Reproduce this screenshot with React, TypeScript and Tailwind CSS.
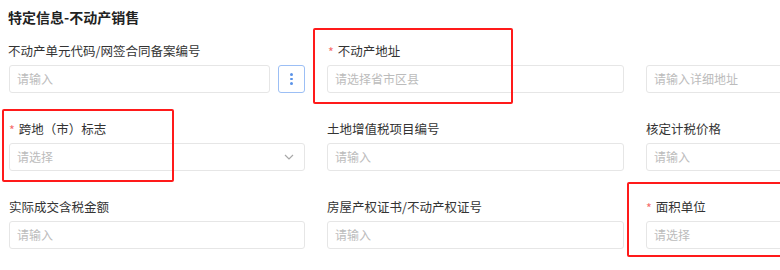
import React from 'react';

const font = { fontFamily: '"Noto Sans CJK SC", "Noto Sans", sans-serif' };

function Label({ text, required }: { text: string; required?: boolean }) {
  return (
    <div className="flex h-[18px] items-center text-[12.5px] leading-[18px] text-[#333]">
      {required && <span className="mr-[4px] mt-[2px] text-[#f56c6c]">*</span>}
      {text}
    </div>
  );
}

function TextInput({ placeholder, select }: { placeholder: string; select?: boolean }) {
  return (
    <div className="flex h-[28px] min-w-0 flex-1 items-center rounded-[3px] border border-[#e6e6e6] bg-white pl-[7px] pr-[10px]">
      <input
        readOnly
        placeholder={placeholder}
        className="w-full min-w-0 bg-transparent text-[12px] text-[#333] outline-none placeholder:text-[#bcbcbc]"
        style={font}
      />
      {select && (
        <svg width="10" height="6" viewBox="0 0 10 6" className="shrink-0">
          <path d="M1 1l4 4 4-4" fill="none" stroke="#a8a8a8" strokeWidth="1.2" />
        </svg>
      )}
    </div>
  );
}

function Field({
  label,
  required,
  placeholder,
  select,
}: {
  label: string;
  required?: boolean;
  placeholder: string;
  select?: boolean;
}) {
  return (
    <div className="flex flex-col">
      <Label text={label} required={required} />
      <div className="mt-[5px] flex">
        <TextInput placeholder={placeholder} select={select} />
      </div>
    </div>
  );
}

export default function App() {
  return (
    <div className="relative h-[270px] w-[780px] overflow-hidden bg-white" style={font}>
      <div className="pl-[8px] pt-[7px] text-[14px] font-bold leading-[20px] text-[#222]">
        特定信息-不动产销售
      </div>

      <div className="mt-[15px] grid grid-cols-[297px_297px_297px] gap-x-[22px] gap-y-[27px] pl-[8px]">
        {/* row 1 */}
        <div className="flex flex-col">
          <Label text="不动产单元代码/网签合同备案编号" />
          <div className="mt-[5px] flex gap-[8px] pl-[1px]">
            <TextInput placeholder="请输入" />
            <button className="flex h-[28px] w-[27px] shrink-0 flex-col items-center justify-center gap-[2px] rounded-[3px] border border-[#9cbff5] bg-white">
              <span className="h-[2.5px] w-[2.5px] rounded-full bg-[#5b93e8]" />
              <span className="h-[2.5px] w-[2.5px] rounded-full bg-[#5b93e8]" />
              <span className="h-[2.5px] w-[2.5px] rounded-full bg-[#5b93e8]" />
            </button>
          </div>
        </div>
        <div className="flex flex-col">
          <div className="pl-[1px]">
            <Label text="不动产地址" required />
          </div>
          <div className="mt-[5px] flex">
            <TextInput placeholder="请选择省市区县" />
          </div>
        </div>
        <div className="flex flex-col">
          <div className="h-[18px]" />
          <div className="mt-[5px] flex">
            <TextInput placeholder="请输入详细地址" />
          </div>
        </div>

        {/* row 2 */}
        <div className="pl-[1px]">
          <Field label="跨地（市）标志" required placeholder="请选择" select />
        </div>
        <Field label="土地增值税项目编号" placeholder="请输入" />
        <Field label="核定计税价格" placeholder="请输入" />

        {/* row 3 */}
        <div className="pl-[1px]">
          <Field label="实际成交含税金额" placeholder="请输入" />
        </div>
        <Field label="房屋产权证书/不动产权证号" placeholder="请输入" />
        <Field label="面积单位" required placeholder="请选择" select />
      </div>

      {/* annotation boxes */}
      <div className="pointer-events-none absolute left-[313px] top-[28px] h-[76px] w-[200px] rounded-[2px] border-2 border-[#ff1a1a]" />
      <div className="pointer-events-none absolute left-[2px] top-[109px] h-[73px] w-[172px] rounded-[2px] border-2 border-[#ff1a1a]" />
      <div className="pointer-events-none absolute left-[627px] top-[182px] h-[75px] w-[200px] rounded-[2px] border-2 border-[#ff1a1a]" />
    </div>
  );
}
